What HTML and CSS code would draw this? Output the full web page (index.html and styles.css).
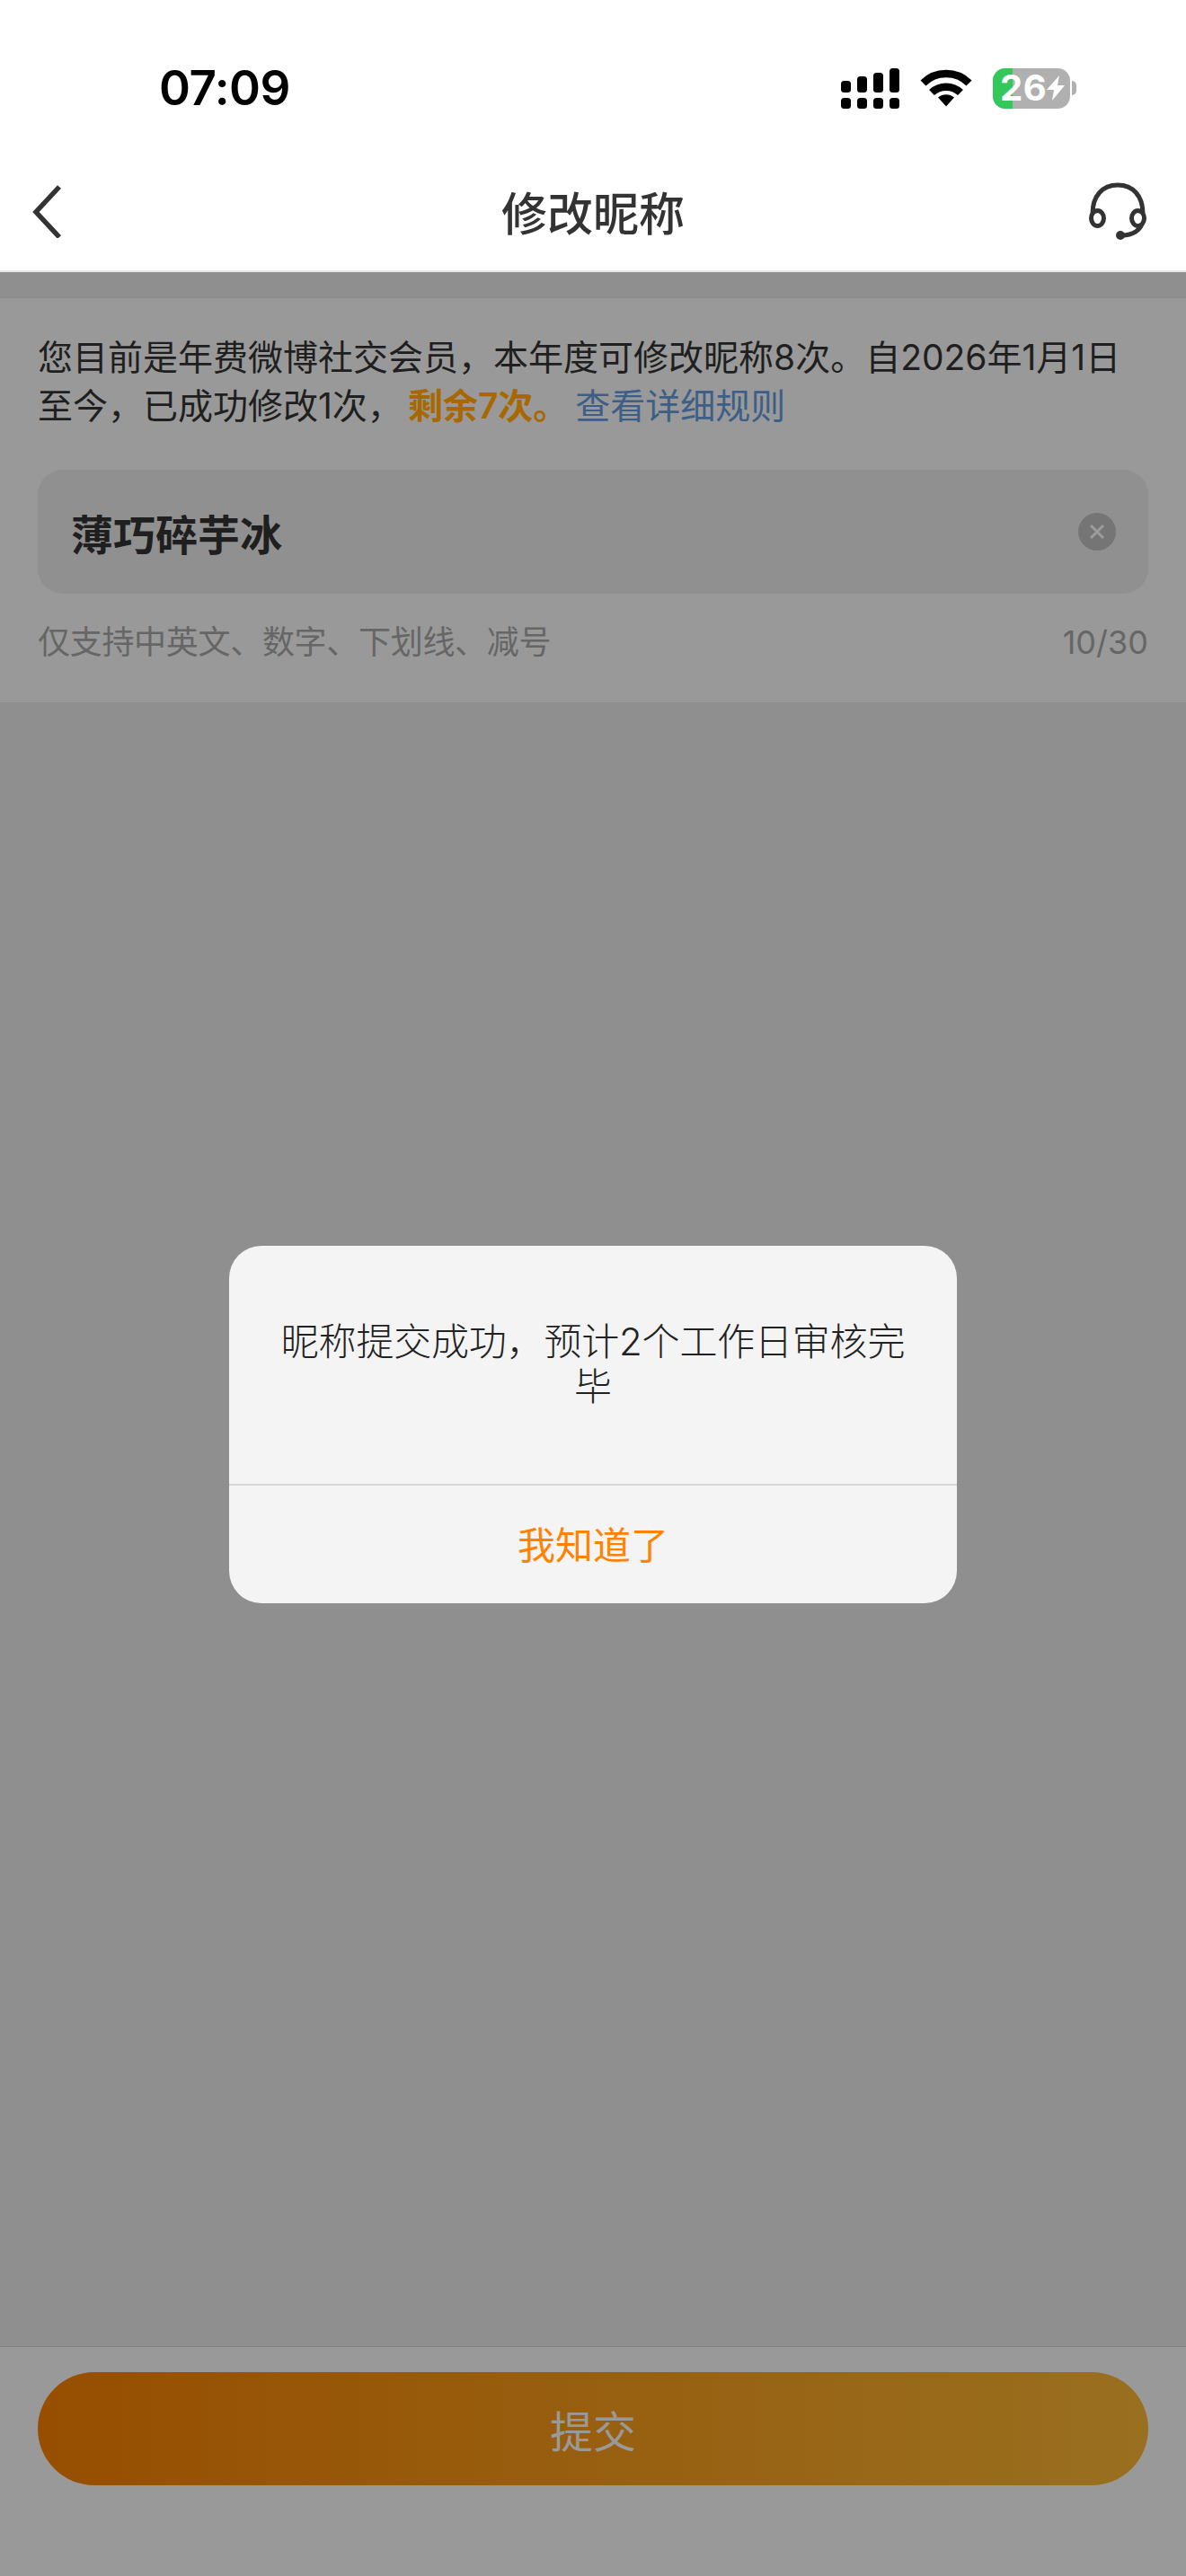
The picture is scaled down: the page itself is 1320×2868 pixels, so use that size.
FILE: index.html
```html
<!DOCTYPE html>
<html lang="zh-CN">
<head>
    <meta charset="UTF-8">
    <meta name="viewport" content="width=device-width, initial-scale=1.0">
    <title>修改昵称</title>
    <link rel="stylesheet" href="styles.css">
</head>
<body>
    <div class="page">
        <header class="top">
            <div class="status-bar">
                <span class="time">07:09</span>
                <div class="status-icons">
                    <svg class="signal" width="65" height="45" viewBox="0 0 65 45" fill="#000">
                        <rect x="0" y="14" width="11" height="13" rx="3.5"/>
                        <rect x="18" y="9" width="11" height="18" rx="3.5"/>
                        <rect x="36" y="5" width="11" height="22" rx="3.5"/>
                        <rect x="54" y="0" width="11" height="27" rx="3.5"/>
                        <rect x="0" y="33" width="11" height="12" rx="3.5"/>
                        <rect x="18" y="33" width="11" height="12" rx="3.5"/>
                        <rect x="36" y="33" width="11" height="12" rx="3.5"/>
                        <rect x="54" y="33" width="11" height="12" rx="3.5"/>
                    </svg>
                    <svg class="wifi" width="58" height="44" viewBox="0 0 58 44" fill="none" stroke="#000" stroke-width="8.5">
                        <path d="M3.5 16.5C17.5 2.5 40.5 2.5 54.5 16.5"/>
                        <path d="M13 27C22 18.500 36 18.500 45 27"/>
                        <path d="M20 32.500C25 28 33 28 38 32.500L29 42.500Z" fill="#000" stroke="none"/>
                    </svg>
                    <div class="battery">
                        <div class="battery-body">
                            <div class="battery-level"></div>
                            <span class="battery-text">26</span>
                            <svg class="bolt" width="20" height="28" viewBox="0 0 20 28" fill="#fff">
                                <path d="M14 0L0 16H8L6 28L20 11H12Z"/>
                            </svg>
                        </div>
                        <div class="battery-cap"></div>
                    </div>
                </div>
            </div>
            <div class="nav-bar">
                <svg class="back" width="36" height="60" viewBox="0 0 36 60" fill="none" stroke="#333" stroke-width="5.500">
                    <path d="M32 3L6 31L32 59"/>
                </svg>
                <h1 class="nav-title">修改昵称</h1>
                <svg class="service" width="66" height="66" viewBox="0 0 66 66" fill="none" stroke="#333" stroke-width="5">
                    <path d="M5 36C5 16 16 4 33 4C50 4 61 16 61 36"/>
                    <ellipse cx="10.500" cy="41" rx="7" ry="8.500"/>
                    <ellipse cx="55.500" cy="41" rx="7" ry="8.500"/>
                    <path d="M60 47C58 54 50 60 38 60"/>
                    <circle cx="36" cy="60" r="5" fill="#333" stroke="none"/>
                </svg>
            </div>
        </header>

        <main class="main">
            <section class="card">
                <p class="intro">您目前是年费微博社交会员，本年度可修改昵称8次。自2026年1月1日<br>至今，已成功修改1次，<strong class="remain">剩余7次。</strong><a class="rule-link">查看详细规则</a></p>
                <div class="name-field">
                    <span class="name-value">薄巧碎芋冰</span>
                    <svg class="clear" width="42" height="42" viewBox="0 0 42 42">
                        <circle cx="21" cy="21" r="21" fill="#757575"/>
                        <path d="M14 14L28 28M28 14L14 28" stroke="#9c9c9c" stroke-width="3"/>
                    </svg>
                </div>
                <div class="hint-row">
                    <span>仅支持中英文、数字、下划线、减号</span>
                    <span class="count">10/30</span>
                </div>
            </section>
            <div class="submit-bar">
                <button class="submit">提交</button>
            </div>
        </main>
    </div>

    <div class="dialog-layer">
        <div class="dialog">
            <p class="dialog-text">昵称提交成功，预计2个工作日审核完毕</p>
            <div class="dialog-action">我知道了</div>
        </div>
    </div>
</body>
</html>
```

FILE: styles.css
```css
* {
    box-sizing: border-box;
}
html, body {
    margin: 0;
    padding: 0;
}
body {
    font-family: "Inter", "Noto Sans CJK SC", sans-serif;
    color: #1f1f1f;
    background-color: #8f8f8f;
}
.page {
    display: flex;
    flex-direction: column;
    height: 2868px;
    overflow: hidden;
}
.top {
    background-color: #fff;
    border-bottom: 2px solid #e6e6e6;
    height: 303px;
    flex: none;
}
.status-bar {
    display: flex;
    justify-content: space-between;
    align-items: center;
    height: 196px;
    padding: 0 122px 0 177px;
}
.time {
    font-size: 53px;
    font-weight: 600;
    color: #000;
    letter-spacing: -0.5px;
}
.status-icons {
    display: flex;
    align-items: center;
    gap: 23px;
}
.battery {
    display: flex;
    align-items: center;
    gap: 2px;
}
.battery-body {
    position: relative;
    display: flex;
    align-items: center;
    width: 86px;
    height: 45px;
    padding-left: 8px;
    border-radius: 14px;
    background-color: #b0b0b0;
}
.battery-level {
    position: absolute;
    left: 0;
    top: 0;
    bottom: 0;
    width: 22px;
    border-radius: 14px 0 0 14px;
    background-color: #34c759;
}
.battery-text {
    position: relative;
    font-size: 40px;
    font-weight: 700;
    line-height: 1;
    letter-spacing: 0.5px;
    color: #fff;
}
.bolt {
    position: relative;
    flex: none;
}
.battery-cap {
    width: 5px;
    height: 16px;
    border-radius: 0 5px 5px 0;
    background-color: #b0b0b0;
}
.nav-bar {
    display: grid;
    grid-template-columns: 1fr auto 1fr;
    align-items: center;
    height: 78px;
    padding: 0 34px;
}
.service {
    justify-self: end;
    margin-right: 9px;
}
.nav-title {
    margin: 0;
    font-size: 51px;
    font-weight: 500;
    color: #333;
}
.main {
    flex: 1;
    display: flex;
    flex-direction: column;
    justify-content: space-between;
    padding-top: 28px;
}
.card {
    background-color: #999;
    border-top: 1px solid #8c8c8c;
    border-bottom: 1px solid #8c8c8c;
    padding: 39px 42px 42px;
}
.intro {
    margin: 0;
    font-size: 39px;
    line-height: 54px;
}
.remain {
    margin-left: 6px;
    font-weight: 600;
    color: #a86800;
}
.rule-link {
    margin-left: 8px;
    color: #3d5f87;
}
.name-field {
    display: flex;
    justify-content: space-between;
    align-items: center;
    height: 138px;
    margin-top: 44px;
    padding: 0 36px 0 37px;
    border-radius: 28px;
    background-color: #909090;
}
.name-value {
    font-size: 47px;
    font-weight: 600;
}
.hint-row {
    display: flex;
    justify-content: space-between;
    align-items: center;
    margin-top: 29px;
    font-size: 36px;
    line-height: 50px;
    color: #666;
}
.hint-row span:first-child {
    letter-spacing: -0.3px;
}
.submit-bar {
    flex: none;
    height: 256px;
    padding: 28px 42px 0;
    background-color: #999;
    border-top: 1px solid #808080;
}
.submit {
    display: block;
    width: 100%;
    height: 126px;
    border: none;
    border-radius: 63px;
    background: linear-gradient(90deg, #974e00, #997020);
    font-family: inherit;
    font-size: 48px;
    color: #999;
}
.dialog-layer {
    position: absolute;
    left: 0;
    right: 0;
    top: 303px;
    height: 2565px;
    display: flex;
    align-items: center;
    justify-content: center;
}
.dialog {
    width: 810px;
    height: 398px;
    display: flex;
    flex-direction: column;
    border-radius: 36px;
    background-color: #f4f4f4;
    overflow: hidden;
}
.dialog-text {
    margin: 0;
    height: 267px;
    padding: 82px 48px 0;
    font-size: 42px;
    font-weight: 300;
    line-height: 50px;
    letter-spacing: -0.2px;
    text-align: center;
    color: #222;
    border-bottom: 2px solid #d5d5d5;
}
.dialog-action {
    flex: 1;
    display: flex;
    align-items: center;
    justify-content: center;
    padding-bottom: 4px;
    font-size: 42px;
    color: #ff8200;
}
```
